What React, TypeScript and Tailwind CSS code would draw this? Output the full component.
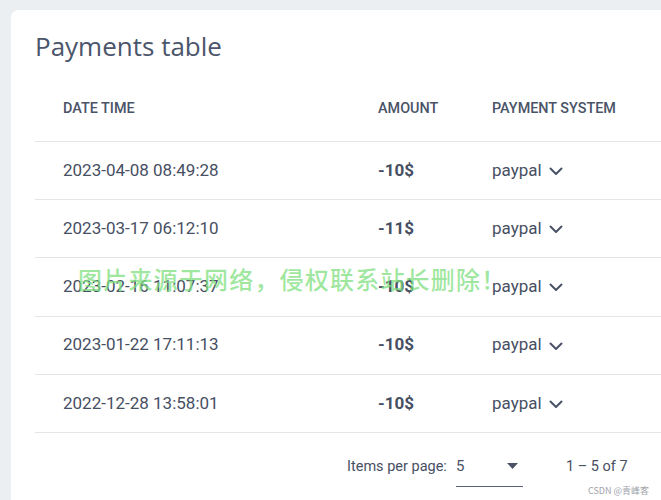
const payments = [
  { id: 1, date: '2023-04-08 08:49:28', amount: '-10$', system: 'paypal' },
  { id: 2, date: '2023-03-17 06:12:10', amount: '-11$', system: 'paypal' },
  { id: 3, date: '2023-02-16 11:07:37', amount: '-10$', system: 'paypal' },
  { id: 4, date: '2023-01-22 17:11:13', amount: '-10$', system: 'paypal' },
  { id: 5, date: '2022-12-28 13:58:01', amount: '-10$', system: 'paypal' },
];

function Chevron() {
  return (
    <svg width="14" height="14" viewBox="0 0 14 14" className="ml-[7px] mt-[1px]">
      <path d="M1.5 4.5 L7 10 L12.5 4.5" fill="none" stroke="#4a5266" strokeWidth="2" strokeLinecap="round" strokeLinejoin="round" />
    </svg>
  );
}

export default function App() {
  return (
    <div className="relative w-[661px] h-[500px] overflow-hidden bg-[#eceff2] pl-[11px] pt-[10px] font-['Roboto',sans-serif] text-[#474f63]">
      <div className="w-[720px] h-[560px] bg-white rounded-lg pl-[24px] pt-[21px]">
        {/* Title */}
        <h1 className="font-['Open_Sans',sans-serif] text-[26px] leading-[30px] text-[#4b556b]">
          Payments table
        </h1>

        {/* Header */}
        <div className="grid grid-cols-[343px_114px_1fr] h-[81px] items-end pb-[24px] border-b border-[#e3e5e8] text-[14.4px] leading-[16px] font-medium uppercase text-[#4a5367]">
          <div className="pl-[28px]">Date time</div>
          <div>Amount</div>
          <div>Payment system</div>
        </div>

        {/* Rows */}
        {payments.map((p) => (
          <div
            key={p.id}
            className="grid grid-cols-[343px_114px_1fr] h-[58.2px] items-center border-b border-[#e3e5e8] text-[17px]"
          >
            <div className="pl-[28px]">{p.date}</div>
            <div className="font-bold">{p.amount}</div>
            <div className="flex items-center">
              {p.system}
              <Chevron />
            </div>
          </div>
        ))}

        {/* Paginator */}
        <div className="flex items-center h-[68px] pl-[312px] text-[14.5px]">
          <span>Items per page:</span>
          <div className="ml-[9px] w-[67px] h-[28px] flex items-center justify-between border-b-[1.5px] border-[#5a6275] mt-[12px] pb-[2px]">
            <span className="text-[15px] -mt-[10px]">5</span>
            <svg width="11" height="6" viewBox="0 0 11 6" className="mr-[5px] -mt-[10px]">
              <path d="M0 0 L11 0 L5.5 6 Z" fill="#4a5266" />
            </svg>
          </div>
          <span className="ml-[43px] text-[14.5px]">1 – 5 of 7</span>
        </div>
      </div>

      {/* Watermarks */}
      <div className="absolute left-[78px] top-[261px] text-[24px] font-medium text-[#7fe07f]/75 font-['Noto_Sans_CJK_SC',sans-serif] tracking-[1.2px] pointer-events-none">
        图片来源于网络，侵权联系站长删除！
      </div>
      <div className="absolute right-[12px] bottom-[3px] text-[9px] text-[#a0a4ab] font-['Noto_Sans_CJK_SC',sans-serif]">
        CSDN @青峰客
      </div>
    </div>
  );
}
